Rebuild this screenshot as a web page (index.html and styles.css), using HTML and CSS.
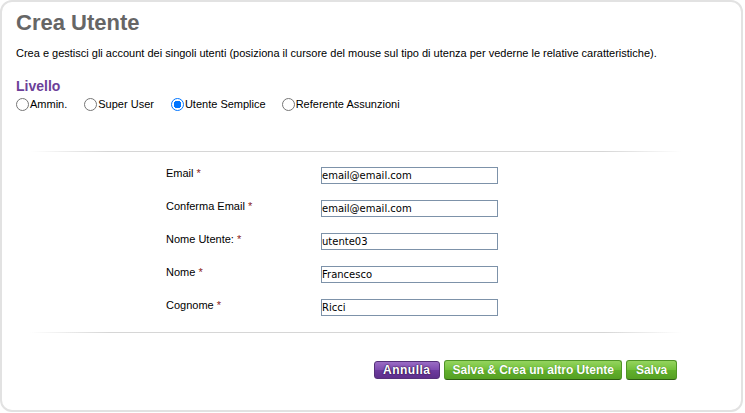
FILE: index.html
```html
<!DOCTYPE html>
<html lang="it">
<head>
<meta charset="utf-8">
<title>Crea Utente</title>
<link rel="stylesheet" href="styles.css">
</head>
<body>
<div class="box">
  <h1 class="title">Crea Utente</h1>
  <p class="desc">Crea e gestisci gli account dei singoli utenti (posiziona il cursore del mouse sul tipo di utenza per vederne le relative caratteristiche).</p>
  <h2 class="section">Livello</h2>
  <div class="levels">
    <label class="level"><span class="radio"></span>Ammin.</label>
    <label class="level"><span class="radio"></span>Super User</label>
    <label class="level"><span class="radio checked"></span>Utente Semplice</label>
    <label class="level"><span class="radio"></span>Referente Assunzioni</label>
  </div>
  <div class="sep"></div>
  <div class="form">
    <div class="label">Email <span class="req">*</span></div>
    <div class="field">email@email.com</div>
    <div class="label">Conferma Email <span class="req">*</span></div>
    <div class="field">email@email.com</div>
    <div class="label">Nome Utente: <span class="req">*</span></div>
    <div class="field">utente03</div>
    <div class="label">Nome <span class="req">*</span></div>
    <div class="field">Francesco</div>
    <div class="label">Cognome <span class="req">*</span></div>
    <div class="field">Ricci</div>
  </div>
  <div class="sep sep2"></div>
  <div class="actions">
    <button class="btn purple">Annulla</button>
    <button class="btn green">Salva &amp; Crea un altro Utente</button>
    <button class="btn green">Salva</button>
  </div>
</div>
</body>
</html>
```
FILE: styles.css
```css
html, body {
  margin: 0;
  padding: 0;
  background: #ffffff;
}
body {
  font-family: "Liberation Sans", Arial, sans-serif;
  font-size: 11px;
  color: #000;
}
.box {
  box-sizing: border-box;
  width: 743px;
  height: 412px;
  border: 2px solid #e2e2e2;
  border-radius: 12px;
  padding: 8px 0 0 14px;
}
.title {
  margin: 0;
  font-size: 22px;
  line-height: 26px;
  font-weight: bold;
  color: #666666;
}
.desc {
  margin: 10px 0 0 0;
  font-size: 11px;
  line-height: 14px;
}
.section {
  margin: 18px 0 0 0;
  font-size: 14px;
  line-height: 16px;
  font-weight: bold;
  color: #6c3f99;
}
.levels {
  display: flex;
  margin-top: 2px;
  height: 16px;
  align-items: center;
}
.level {
  display: flex;
  align-items: center;
  font-size: 11px;
  line-height: 14px;
  margin-right: 17px;
}
.level:nth-child(3) { margin-right: 16px; }
.radio {
  box-sizing: border-box;
  width: 13px;
  height: 13px;
  border: 1px solid #767676;
  border-radius: 50%;
  background: #fff;
  margin: 0 1px 0 0;
}
.radio.checked {
  border: 1px solid #0075ff;
  background: radial-gradient(circle, #0075ff 0 3.6px, #fff 4px);
}
.sep {
  height: 1px;
  margin: 39px 0 0 14px;
  width: 652px;
  background: linear-gradient(to right, rgba(210,210,210,0), #d6d6d6 12%, #d6d6d6 88%, rgba(210,210,210,0));
}
.form {
  display: grid;
  grid-template-columns: 155px 177px;
  grid-auto-rows: 33px;
  margin: 13px 0 0 150px;
}
.label {
  font-size: 11px;
  line-height: 14px;
  padding-top: 1px;
}
.req { color: #8b1a1a; }
.field {
  box-sizing: border-box;
  height: 17px;
  margin-top: 2px;
  border: 1px solid #7d92a9;
  font-family: "DejaVu Sans", Verdana, sans-serif;
  font-size: 10px;
  line-height: 16px;
  padding-left: 0;
  color: #000;
}
.sep2 {
  margin-top: 2px;
}
.actions {
  display: flex;
  align-items: center;
  margin: 27px 0 0 358px;
  gap: 4px;
}
.btn {
  font-family: "Liberation Sans", Arial, sans-serif;
  font-size: 12px;
  font-weight: bold;
  color: #fff;
  height: 20px;
  border-radius: 3px;
  padding: 0 7px 0 8px;
  line-height: 16px;
  cursor: pointer;
}
.purple {
  height: 18px;
  background: linear-gradient(#9a6cc4, #7e4bb0 50%, #6d3b9e 51%, #5e2f8c);
  border: 1px solid #55307a;
  text-shadow: 0 0 2px #2a1040, 0 0 1px #2a1040;
  padding: 0 8px;
  letter-spacing: 0.5px;
}
.green {
  background: linear-gradient(#94d45e, #72c03a 50%, #62b02c 51%, #55a023);
  border: 1px solid #4f9426;
  border-bottom-color: #2e5e12;
  text-shadow: 0 0 1px #3b7a1a;
}
.green:last-child { padding: 0 9px; }
```
